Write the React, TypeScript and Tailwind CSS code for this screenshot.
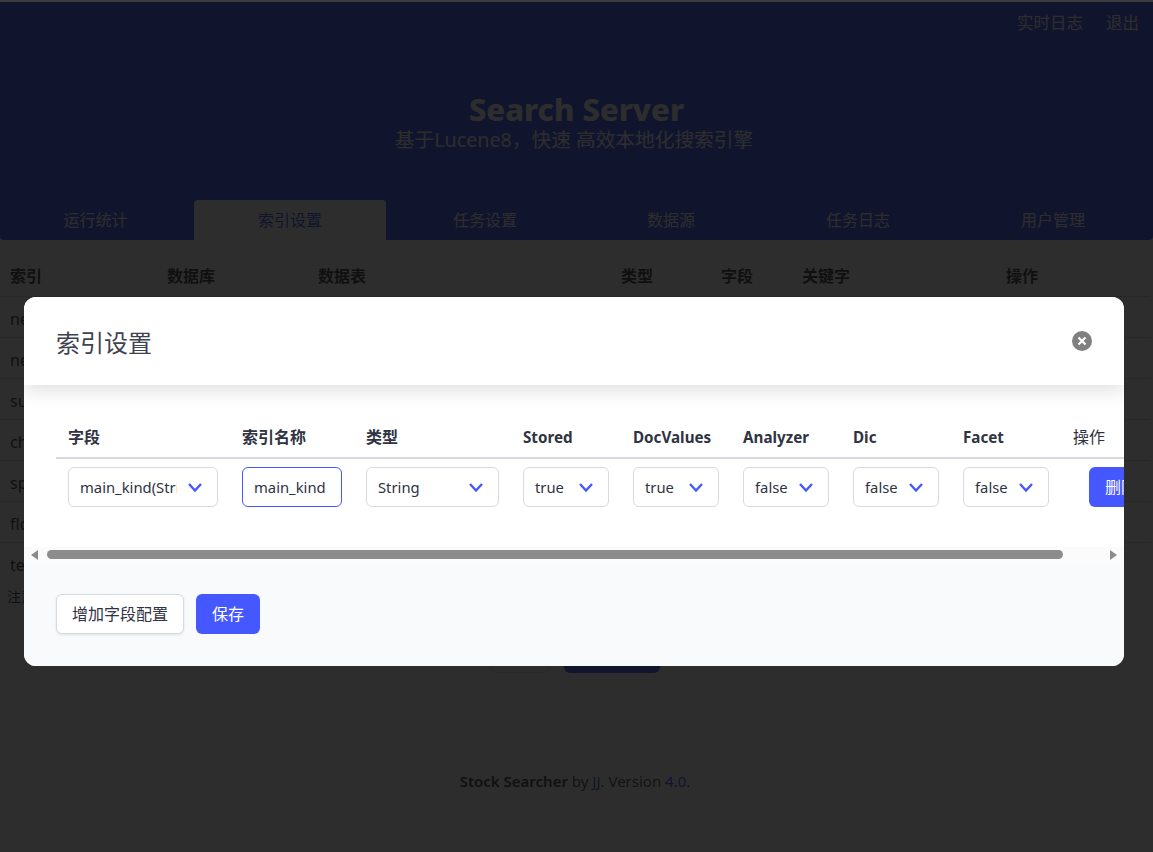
import React from "react";

const FONT = "font-['Noto_Sans','Noto_Sans_CJK_SC',sans-serif]";

function Chevron() {
  return (
    <svg width="16" height="11" viewBox="0 0 16 11" fill="none" className="shrink-0">
      <path d="M2 2 L8 8.5 L14 2" stroke="#4558ff" strokeWidth="2.4" />
    </svg>
  );
}

function Sel({ text, w, textW }: { text: string; w: string; textW: string }) {
  return (
    <div className={`${w} h-10 rounded-md border border-[#d9d9e3] bg-white flex items-center pl-[11px] pr-[14px] justify-between`}>
      <span className={`${textW} overflow-hidden whitespace-nowrap text-[14.8px] text-[#2f3342]`}>{text}</span>
      <Chevron />
    </div>
  );
}

const rows = ["ne", "ne", "su", "ch", "sp", "flo", "te"];

export default function App() {
  return (
    <div className={`${FONT} w-[1153px] h-[852px] overflow-hidden flex flex-col bg-white`}>
      <div className="h-[2px] shrink-0 bg-[#3c3c3c]" />
      <div className="relative flex-1 overflow-hidden">
        {/* page under the overlay */}
        <header className="h-[238px] bg-[#3a52ff] rounded-b-[4px] flex flex-col text-white">
          <div className="h-[42px] shrink-0 flex items-center justify-end gap-[23px] pr-[14px] text-[16.5px]">
            <span>实时日志</span>
            <span>退出</span>
          </div>
          <h1 className="mt-[47px] text-center text-[31px] leading-[36px] font-extrabold">Search Server</h1>
          <p className="mt-[1px] pr-[5px] text-center text-[19.7px] leading-[24px]">基于Lucene8，快速 高效本地化搜索引擎</p>
          <nav className="mt-auto h-10 flex text-[16px]">
            <div className="w-[194px] pr-[3px] flex items-center justify-center">运行统计</div>
            <div className="w-[192px] flex items-center justify-center bg-white text-[#3a52ff] rounded-t-[4px]">索引设置</div>
            <div className="w-[198px] flex items-center justify-center">任务设置</div>
            <div className="w-[174px] flex items-center justify-center">数据源</div>
            <div className="w-[200px] flex items-center justify-center">任务日志</div>
            <div className="w-[195px] pr-[5px] flex items-center justify-center">用户管理</div>
          </nav>
        </header>
        <section className="w-[1150px] pt-4 text-[#363636] text-[16px]">
          <div className="h-[41px] grid grid-cols-[157px_151px_303px_100px_81px_204px_1fr] items-center border-b border-[#dbdbdb] font-semibold">
            {["索引", "数据库", "数据表", "类型", "字段", "关键字", "操作"].map((t) => (
              <div key={t} className="pl-[10px]">{t}</div>
            ))}
          </div>
          {rows.map((t, i) => (
            <div key={i} className={`h-[41px] flex items-center pl-[10px] pt-[3px] ${i < 6 ? "border-b border-[#dbdbdb]" : ""}`}>{t}</div>
          ))}
          <p className="pl-[7px] mt-[3px] text-[14px] leading-5">注意</p>
          <div className="mt-[26px] flex justify-center gap-[14px]">
            <div className="w-[60px] h-10 rounded-md border border-[#dbdbdb] bg-white" />
            <div className="w-[96px] h-10 rounded-md bg-[#3a52ff]" />
          </div>
          <footer className="mt-[96px] text-center text-[15px] leading-6 text-[#4a4a4a]">
            <strong className="font-semibold text-[#363636]">Stock Searcher</strong> by <span className="text-[#3a52ff]">JJ</span>. Version <span className="text-[#3a52ff]">4.0</span>.
          </footer>
        </section>

        {/* modal */}
        <div className="absolute inset-0 bg-[rgba(10,10,10,0.86)]" />
        <div className="absolute left-[24px] top-[295px] w-[1100px] h-[369px] rounded-xl overflow-hidden flex flex-col bg-white">
          <div className="relative z-10 h-[88px] shrink-0 px-8 flex items-center justify-between bg-white shadow-[0_6px_18px_rgba(10,10,10,0.12)]">
            <h2 className="mt-1 text-[24px] text-[#3f4350]">索引设置</h2>
            <button className="w-5 h-5 rounded-full bg-[#808080] flex items-center justify-center">
              <svg width="10" height="10" viewBox="0 0 10 10">
                <path d="M1.5 1.5 L8.5 8.5 M8.5 1.5 L1.5 8.5" stroke="#fff" strokeWidth="2.2" />
              </svg>
            </button>
          </div>
          <div className="h-[162px] shrink-0 overflow-hidden pl-8 pt-8">
            <div className="w-[1200px]">
              <div className="grid grid-cols-[174px_124px_157px_110px_110px_110px_110px_110px_1fr] w-[1068px] h-[42px] border-b-2 border-[#d8d8e2] pt-2 text-[16px] leading-6 font-bold text-[#2f3342] [&>div]:pl-3">
                <div>字段</div>
                <div>索引名称</div>
                <div>类型</div>
                <div className="text-[15.2px]">Stored</div>
                <div className="text-[15.2px]">DocValues</div>
                <div className="text-[15.2px]">Analyzer</div>
                <div className="text-[15.2px]">Dic</div>
                <div className="text-[15.2px]">Facet</div>
                <div className="font-normal">操作</div>
              </div>
              <div className="grid grid-cols-[174px_124px_157px_110px_110px_110px_110px_110px_1fr] pt-2 [&>div]:pl-3">
                <div><Sel text="main_kind(String)" w="w-[150px]" textW="w-[97px]" /></div>
                <div>
                  <input
                    readOnly
                    value="main_kind"
                    className="w-[100px] h-10 rounded-md border border-[#4558ff] pl-[11px] pr-2 text-[14.8px] text-[#2f3342] outline-none"
                  />
                </div>
                <div><Sel text="String" w="w-[133px]" textW="w-[60px]" /></div>
                <div><Sel text="true" w="w-[86px]" textW="w-[40px]" /></div>
                <div><Sel text="true" w="w-[86px]" textW="w-[40px]" /></div>
                <div><Sel text="false" w="w-[86px]" textW="w-[40px]" /></div>
                <div><Sel text="false" w="w-[86px]" textW="w-[40px]" /></div>
                <div><Sel text="false" w="w-[86px]" textW="w-[40px]" /></div>
                <div>
                  <button className="ml-4 w-16 h-10 rounded-md bg-[#4558ff] text-white text-[16px]">删除</button>
                </div>
              </div>
            </div>
          </div>
          <div className="h-[15px] shrink-0 bg-[#fbfbfb] flex items-center pl-[7px] pr-[7px]">
            <svg width="8" height="10" viewBox="0 0 8 10" className="shrink-0"><path d="M7 0 V10 L0 5 Z" fill="#8c8c8c" /></svg>
            <div className="ml-[8px] w-[1016px] h-[9px] rounded-full bg-[#8c8c8c]" />
            <div className="flex-1" />
            <svg width="8" height="10" viewBox="0 0 8 10" className="shrink-0"><path d="M1 0 V10 L8 5 Z" fill="#8c8c8c" /></svg>
          </div>
          <div className="flex-1 bg-[#f9fafc] px-8 flex items-center gap-3">
            <button className="w-[128px] h-10 rounded-md border border-[#d9d9e3] bg-white text-[16px] text-[#2f3342] shadow-[0_1px_3px_rgba(10,10,10,0.1)]">增加字段配置</button>
            <button className="w-16 h-10 rounded-md bg-[#4558ff] text-white text-[16px]">保存</button>
          </div>
        </div>
      </div>
    </div>
  );
}
